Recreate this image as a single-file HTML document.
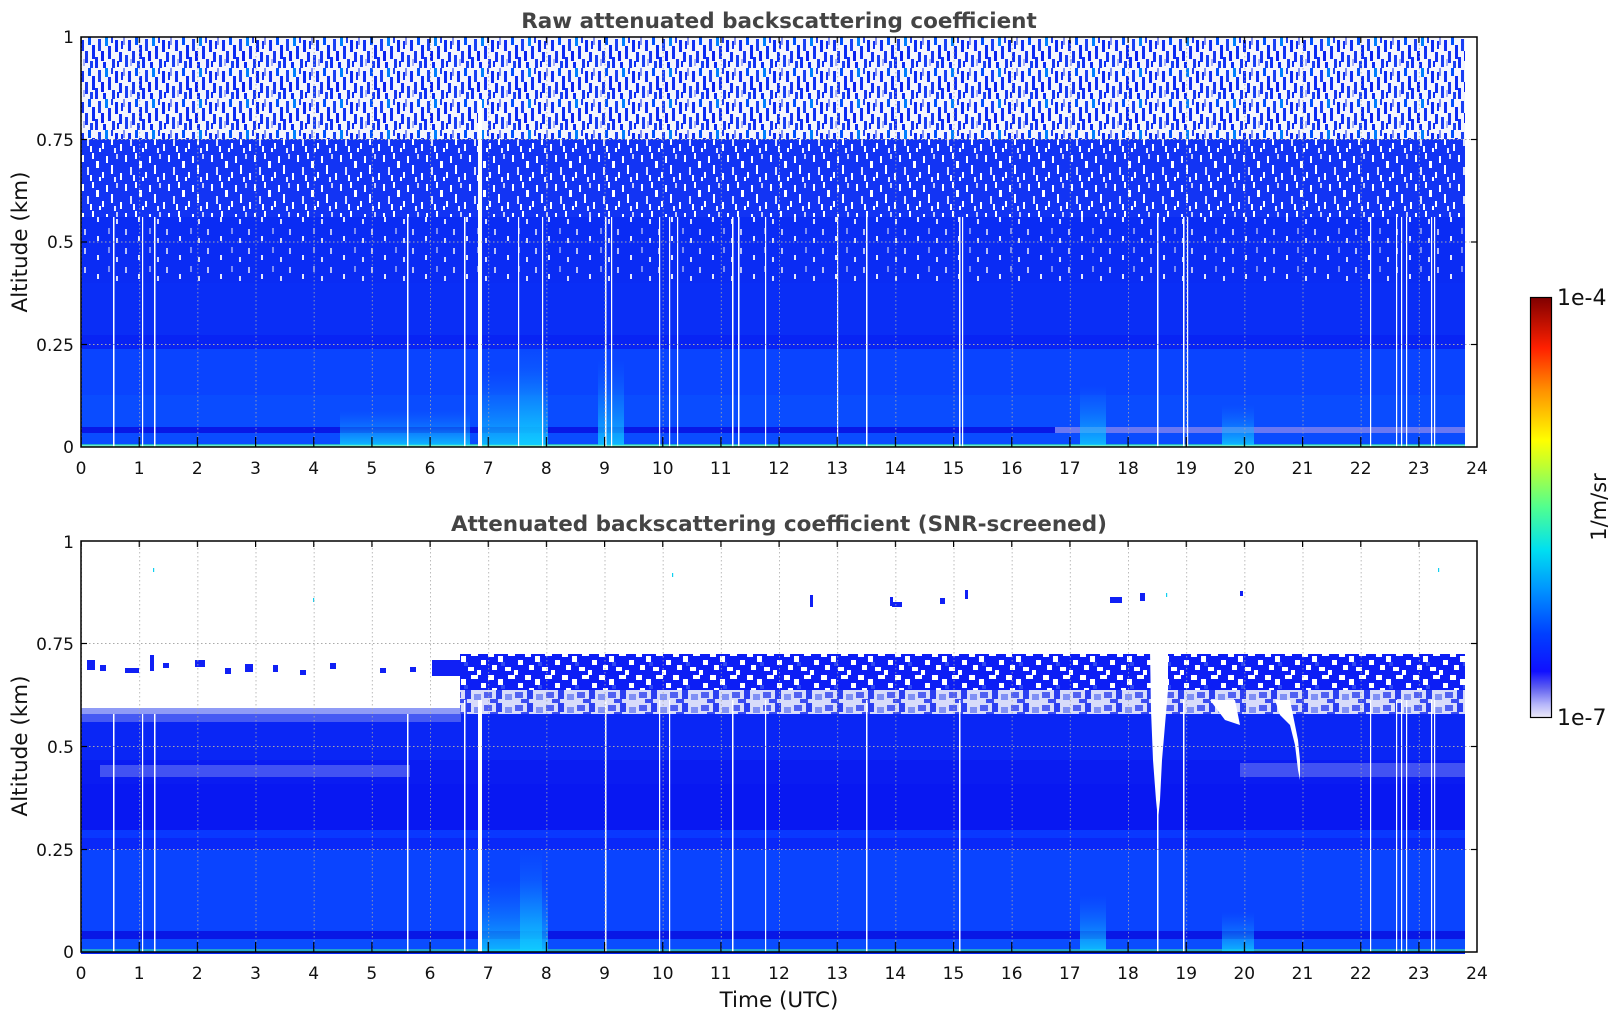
<!DOCTYPE html>
<html><head><meta charset="utf-8"><style>
html,body{margin:0;padding:0;background:#fff}
svg{display:block;font-family:"DejaVu Sans","Liberation Sans",sans-serif}
</style></head><body>
<svg width="1621" height="1020" viewBox="0 0 1621 1020" xmlns="http://www.w3.org/2000/svg">
<defs>
<pattern id="spkA" x="81" y="37" width="47" height="31" patternUnits="userSpaceOnUse">
<rect width="47" height="31" fill="#f4f5fd"/>
<rect x="0" y="3" width="3" height="11" fill="#1030f5"/><rect x="4" y="14" width="3" height="12" fill="#1838f2"/>
<rect x="7" y="0" width="3" height="8" fill="#0050ff"/><rect x="11" y="8" width="3" height="14" fill="#0a2af5"/>
<rect x="14" y="20" width="3" height="11" fill="#1030f5"/><rect x="17" y="2" width="3" height="12" fill="#1a40f5"/>
<rect x="20" y="14" width="3" height="10" fill="#0a20f0"/><rect x="24" y="0" width="3" height="9" fill="#0080ff"/>
<rect x="27" y="9" width="3" height="13" fill="#1030f5"/><rect x="31" y="22" width="3" height="9" fill="#1838f2"/>
<rect x="34" y="3" width="3" height="12" fill="#0a2af5"/><rect x="38" y="15" width="3" height="10" fill="#1030f5"/>
<rect x="42" y="0" width="2" height="8" fill="#8090f3"/><rect x="44" y="18" width="3" height="12" fill="#1a40f5"/>
<rect x="2" y="22" width="2" height="7" fill="#a8b2f6"/><rect x="22" y="25" width="3" height="6" fill="#0a2af5"/>
<rect x="30" y="0" width="2" height="6" fill="#2040f0"/><rect x="9" y="24" width="3" height="7" fill="#1a40f5"/>
<rect x="40" y="4" width="2" height="8" fill="#1030f5"/><rect x="36" y="24" width="2" height="6" fill="#0a2af5"/>
</pattern>
<pattern id="spkB" x="81" y="37" width="43" height="29" patternUnits="userSpaceOnUse">
<rect width="43" height="29" fill="#1234f4"/>
<rect x="1" y="2" width="2" height="7" fill="#fff"/><rect x="6" y="14" width="2" height="8" fill="#dfe3fb"/>
<rect x="11" y="0" width="2" height="6" fill="#fff"/><rect x="15" y="8" width="3" height="7" fill="#fff"/>
<rect x="21" y="19" width="2" height="6" fill="#fff"/><rect x="25" y="3" width="2" height="7" fill="#fff"/>
<rect x="30" y="12" width="2" height="9" fill="#fff"/><rect x="35" y="1" width="2" height="5" fill="#c8cef8"/>
<rect x="39" y="20" width="2" height="7" fill="#fff"/><rect x="9" y="22" width="2" height="6" fill="#fff"/>
<rect x="18" y="24" width="2" height="4" fill="#fff"/><rect x="33" y="24" width="2" height="5" fill="#eef"/>
</pattern>
<pattern id="spkC" x="81" y="37" width="41" height="19" patternUnits="userSpaceOnUse">
<rect width="41" height="19" fill="#0a2cf4"/>
<rect x="3" y="2" width="2" height="6" fill="#b8c0f8"/><rect x="16" y="9" width="2" height="5" fill="#e8eafb"/>
<rect x="27" y="1" width="2" height="6" fill="#8090f3"/><rect x="35" y="11" width="2" height="5" fill="#d8dcfa"/>
</pattern>
<pattern id="holes" x="81" y="652" width="37" height="23" patternUnits="userSpaceOnUse">
<rect width="37" height="23" fill="#0c1ef5"/>
<rect x="0" y="0" width="6" height="5" fill="#fff"/><rect x="10" y="4" width="5" height="6" fill="#fff"/>
<rect x="20" y="0" width="7" height="4" fill="#fff"/><rect x="30" y="8" width="5" height="5" fill="#fff"/>
<rect x="4" y="13" width="5" height="5" fill="#fff"/><rect x="17" y="15" width="6" height="4" fill="#fff"/>
<rect x="26" y="18" width="4" height="5" fill="#fff"/><rect x="13" y="10" width="4" height="4" fill="#3048f5"/>
</pattern>
<pattern id="holesL" x="81" y="690" width="31" height="13" patternUnits="userSpaceOnUse">
<rect width="31" height="13" fill="#d8dcfa"/>
<rect x="0" y="2" width="8" height="6" fill="#5060f2"/><rect x="12" y="0" width="6" height="9" fill="#2a3ef2"/>
<rect x="21" y="4" width="7" height="6" fill="#8090f4"/><rect x="6" y="9" width="8" height="4" fill="#3a4cf2"/>
</pattern>
<pattern id="vgrid" x="81" y="0" width="58.1667" height="4" patternUnits="userSpaceOnUse">
<rect x="0" y="0" width="1" height="1.5" fill="#aaa"/>
</pattern>
<pattern id="xtick" x="80.5" y="0" width="58.1667" height="10" patternUnits="userSpaceOnUse">
<rect x="0" y="0" width="1.2" height="10" fill="#000"/>
</pattern>
<linearGradient id="jet" x1="0" y1="1" x2="0" y2="0">
<stop offset="0" stop-color="#eceaf8"/><stop offset="0.03" stop-color="#b8b8fa"/>
<stop offset="0.07" stop-color="#6060f0"/><stop offset="0.11" stop-color="#1010ff"/>
<stop offset="0.2" stop-color="#0040ff"/><stop offset="0.3" stop-color="#0090ff"/>
<stop offset="0.4" stop-color="#00e0f0"/><stop offset="0.5" stop-color="#50ff90"/>
<stop offset="0.6" stop-color="#c0ff30"/><stop offset="0.66" stop-color="#ffff00"/>
<stop offset="0.78" stop-color="#ff9000"/><stop offset="0.88" stop-color="#ff2000"/>
<stop offset="1" stop-color="#800000"/>
</linearGradient>
<linearGradient id="plume" x1="0" y1="1" x2="0" y2="0">
<stop offset="0" stop-color="#10d0ff" stop-opacity="0.8"/><stop offset="1" stop-color="#1080ff" stop-opacity="0"/>
</linearGradient>
</defs>

<!-- TOP PLOT -->
<text x="779" y="28" text-anchor="middle" font-size="21.5" font-weight="bold" fill="#444">Raw attenuated backscattering coefficient</text>
<g>
<rect x="81" y="37" width="1384" height="102" fill="url(#spkA)"/>
<rect x="81" y="139" width="1384" height="78" fill="url(#spkB)"/>
<rect x="81" y="217" width="1384" height="66" fill="url(#spkC)"/>
<rect x="81" y="283" width="1384" height="62" fill="#0a2ef6"/>
<rect x="81" y="335" width="1384" height="14" fill="#0824f4"/>
<rect x="81" y="349" width="1384" height="78" fill="#0a44ff"/>
<rect x="81" y="395" width="1384" height="32" fill="#0a4cff"/>
<rect x="81" y="427" width="1384" height="6" fill="#0818e6"/>
<rect x="1055" y="427" width="410" height="6" fill="#6a78f2"/>
<rect x="81" y="433" width="1384" height="12" fill="#0a4cff"/>
<rect x="81" y="444" width="1384" height="3" fill="#30e0b0" opacity="0.7"/>
<rect x="478" y="370" width="70" height="75" fill="url(#plume)"/>
<rect x="520" y="340" width="22" height="105" fill="url(#plume)"/>
<rect x="598" y="360" width="26" height="85" fill="url(#plume)"/>
<rect x="1080" y="385" width="26" height="60" fill="url(#plume)"/>
<rect x="1222" y="405" width="32" height="40" fill="url(#plume)"/>
<rect x="340" y="410" width="130" height="35" fill="url(#plume)"/>
</g>
<g fill="#fff">
<rect x="113" y="217" width="1.5" height="230"/><rect x="142" y="217" width="1.2" height="230"/><rect x="154" y="217" width="1.5" height="230"/>
<rect x="407" y="217" width="1.5" height="230"/><rect x="464" y="217" width="1.5" height="230"/><rect x="478" y="100" width="4" height="347"/>
<rect x="518" y="217" width="1.2" height="230"/><rect x="542" y="217" width="1.2" height="230"/><rect x="605" y="217" width="1.5" height="230"/>
<rect x="611" y="217" width="1.2" height="230"/><rect x="659" y="217" width="1.2" height="230"/><rect x="669" y="217" width="1.2" height="230"/>
<rect x="677" y="217" width="1.2" height="230"/><rect x="732" y="217" width="1.5" height="230"/><rect x="738" y="217" width="1.5" height="230"/>
<rect x="765" y="217" width="1.2" height="230"/><rect x="837" y="217" width="1.2" height="230"/><rect x="866" y="217" width="1.5" height="230"/>
<rect x="959" y="217" width="1.5" height="230"/><rect x="962" y="217" width="1.2" height="230"/><rect x="1157" y="217" width="1.5" height="230"/>
<rect x="1183" y="217" width="1.5" height="230"/><rect x="1187" y="217" width="1.2" height="230"/><rect x="1370" y="217" width="1.2" height="230"/>
<rect x="1396" y="217" width="1.2" height="230"/><rect x="1401" y="217" width="1.2" height="230"/><rect x="1406" y="217" width="1.2" height="230"/>
<rect x="1431" y="217" width="1.2" height="230"/><rect x="1434" y="217" width="1.2" height="230"/>
</g>
<rect x="81" y="37" width="1396" height="410" fill="url(#vgrid)" opacity="0.8"/>
<g stroke="#aaa" stroke-dasharray="1.5 2.5" stroke-width="1">
<line x1="81" y1="344.5" x2="1477" y2="344.5"/><line x1="81" y1="242" x2="1477" y2="242"/><line x1="81" y1="139.5" x2="1477" y2="139.5"/>
</g>
<rect x="81" y="37" width="1396" height="410" fill="none" stroke="#000" stroke-width="1.5"/>
<rect x="81" y="437" width="1396" height="10" fill="url(#xtick)"/>
<rect x="81" y="37" width="1396" height="6" fill="url(#xtick)"/>
<g stroke="#000" stroke-width="1.2">
<line x1="81" y1="344.5" x2="87" y2="344.5"/><line x1="81" y1="242" x2="87" y2="242"/><line x1="81" y1="139.5" x2="87" y2="139.5"/>
<line x1="1471" y1="344.5" x2="1477" y2="344.5"/><line x1="1471" y1="242" x2="1477" y2="242"/><line x1="1471" y1="139.5" x2="1477" y2="139.5"/>
</g>
<g font-size="17" text-anchor="end" fill="#111">
<text x="74" y="43">1</text><text x="74" y="146">0.75</text><text x="74" y="248">0.5</text><text x="74" y="351">0.25</text><text x="74" y="453">0</text>
</g>
<text transform="translate(27 242) rotate(-90)" text-anchor="middle" font-size="21.5" fill="#111">Altitude (km)</text>
<g font-size="17" text-anchor="middle" fill="#111">
<text x="81" y="474">0</text><text x="139.2" y="474">1</text><text x="197.3" y="474">2</text><text x="255.5" y="474">3</text><text x="313.7" y="474">4</text><text x="371.8" y="474">5</text><text x="430" y="474">6</text><text x="488.2" y="474">7</text><text x="546.3" y="474">8</text><text x="604.5" y="474">9</text><text x="662.7" y="474">10</text><text x="720.8" y="474">11</text><text x="779" y="474">12</text><text x="837.2" y="474">13</text><text x="895.3" y="474">14</text><text x="953.5" y="474">15</text><text x="1011.7" y="474">16</text><text x="1069.8" y="474">17</text><text x="1128" y="474">18</text><text x="1186.2" y="474">19</text><text x="1244.3" y="474">20</text><text x="1302.5" y="474">21</text><text x="1360.7" y="474">22</text><text x="1418.8" y="474">23</text><text x="1477" y="474">24</text>
</g>

<!-- BOTTOM PLOT -->
<text x="779" y="531" text-anchor="middle" font-size="21.5" font-weight="bold" fill="#444">Attenuated backscattering coefficient (SNR-screened)</text>
<g>
<rect x="460" y="654" width="1005" height="40" fill="url(#holes)"/>
<rect x="460" y="690" width="1005" height="24" fill="url(#holesL)"/>
<g fill="#1020f5">
<rect x="87" y="660" width="8" height="10"/><rect x="100" y="665" width="6" height="6"/><rect x="125" y="668" width="14" height="5"/>
<rect x="150" y="655" width="4" height="16"/><rect x="163" y="663" width="6" height="5"/><rect x="195" y="660" width="10" height="7"/>
<rect x="225" y="668" width="6" height="6"/><rect x="245" y="664" width="8" height="8"/><rect x="273" y="665" width="5" height="7"/>
<rect x="300" y="670" width="6" height="5"/><rect x="330" y="663" width="6" height="6"/><rect x="380" y="668" width="6" height="5"/>
<rect x="410" y="667" width="6" height="5"/><rect x="432" y="660" width="28" height="16"/>
</g>
<rect x="81" y="714" width="1384" height="240" fill="#0a26f5"/>
<rect x="81" y="708" width="380" height="14" fill="#6070f2" opacity="0.7"/>
<rect x="81" y="760" width="1384" height="24" fill="#0a1cf2"/>
<rect x="100" y="765" width="310" height="12" fill="#5060f2" opacity="0.8"/>
<rect x="1240" y="763" width="225" height="14" fill="#5060f2" opacity="0.8"/>
<rect x="81" y="784" width="1384" height="46" fill="#0818f2"/>
<rect x="81" y="830" width="1384" height="20" fill="#0a38ff"/>
<rect x="81" y="838" width="1384" height="12" fill="#0a28f8"/>
<rect x="81" y="850" width="1384" height="82" fill="#0a44ff"/>
<rect x="81" y="931" width="1384" height="8" fill="#0818e6"/>
<rect x="81" y="939" width="1384" height="13" fill="#0a4cff"/>
<rect x="81" y="949" width="1384" height="3" fill="#30e0b0" opacity="0.6"/>
<rect x="478" y="880" width="70" height="72" fill="url(#plume)"/>
<rect x="520" y="850" width="22" height="102" fill="url(#plume)"/>
<rect x="1080" y="895" width="26" height="55" fill="url(#plume)"/>
<rect x="1222" y="912" width="32" height="40" fill="url(#plume)"/>
<polygon points="1150,650 1168,650 1168,690 1162,760 1160,800 1158,820 1156,800 1153,760 1151,710" fill="#fff"/>
<polygon points="1275,700 1290,700 1298,740 1300,760 1300,780 1298,770 1295,745 1290,725 1280,715" fill="#fff"/>
<polygon points="1210,700 1235,700 1240,725 1225,720" fill="#fff"/>
</g>
<g fill="#fff">
<rect x="113" y="714" width="1.5" height="238"/><rect x="142" y="714" width="1.2" height="238"/><rect x="154" y="714" width="1.5" height="238"/>
<rect x="407" y="714" width="1.5" height="238"/><rect x="464" y="700" width="1.5" height="252"/><rect x="478" y="700" width="4" height="252"/>
<rect x="605" y="700" width="1.5" height="252"/><rect x="659" y="700" width="1.2" height="252"/><rect x="669" y="700" width="1.2" height="252"/>
<rect x="732" y="700" width="1.5" height="252"/><rect x="765" y="700" width="1.2" height="252"/><rect x="866" y="700" width="1.5" height="252"/>
<rect x="959" y="700" width="1.5" height="252"/><rect x="1157" y="700" width="1.5" height="252"/><rect x="1183" y="700" width="1.5" height="252"/>
<rect x="1370" y="700" width="1.2" height="252"/><rect x="1396" y="700" width="1.2" height="252"/><rect x="1401" y="700" width="1.2" height="252"/>
<rect x="1406" y="700" width="1.2" height="252"/><rect x="1431" y="700" width="1.2" height="252"/><rect x="1434" y="700" width="1.2" height="252"/>
</g>
<g fill="#1020f5">
<rect x="890" y="597" width="3" height="9"/><rect x="892" y="602" width="10" height="5"/><rect x="1110" y="597" width="12" height="6"/>
<rect x="1140" y="593" width="5" height="8"/><rect x="940" y="598" width="5" height="6"/><rect x="965" y="590" width="3" height="9"/>
<rect x="1240" y="591" width="3" height="5"/><rect x="810" y="595" width="3" height="12"/>
</g>
<g fill="#10d0f0">
<rect x="153" y="568" width="1.2" height="4"/><rect x="313" y="598" width="1.2" height="4"/><rect x="1438" y="568" width="1.2" height="4"/><rect x="1166" y="593" width="1.2" height="4"/><rect x="672" y="573" width="1.2" height="4"/>
</g>
<rect x="81" y="541" width="1396" height="411" fill="url(#vgrid)" opacity="0.8"/>
<g stroke="#aaa" stroke-dasharray="1.5 2.5" stroke-width="1">
<line x1="81" y1="849.5" x2="1477" y2="849.5"/><line x1="81" y1="746.5" x2="1477" y2="746.5"/><line x1="81" y1="643.5" x2="1477" y2="643.5"/>
</g>
<rect x="81" y="541" width="1396" height="411" fill="none" stroke="#000" stroke-width="1.5"/>
<rect x="81" y="942" width="1396" height="10" fill="url(#xtick)"/>
<rect x="81" y="541" width="1396" height="6" fill="url(#xtick)"/>
<g stroke="#000" stroke-width="1.2">
<line x1="81" y1="849.5" x2="87" y2="849.5"/><line x1="81" y1="746.5" x2="87" y2="746.5"/><line x1="81" y1="643.5" x2="87" y2="643.5"/>
<line x1="1471" y1="849.5" x2="1477" y2="849.5"/><line x1="1471" y1="746.5" x2="1477" y2="746.5"/><line x1="1471" y1="643.5" x2="1477" y2="643.5"/>
</g>
<g font-size="17" text-anchor="end" fill="#111">
<text x="74" y="548">1</text><text x="74" y="650">0.75</text><text x="74" y="753">0.5</text><text x="74" y="856">0.25</text><text x="74" y="958">0</text>
</g>
<text transform="translate(27 746) rotate(-90)" text-anchor="middle" font-size="21.5" fill="#111">Altitude (km)</text>
<g font-size="17" text-anchor="middle" fill="#111">
<text x="81" y="979">0</text><text x="139.2" y="979">1</text><text x="197.3" y="979">2</text><text x="255.5" y="979">3</text><text x="313.7" y="979">4</text><text x="371.8" y="979">5</text><text x="430" y="979">6</text><text x="488.2" y="979">7</text><text x="546.3" y="979">8</text><text x="604.5" y="979">9</text><text x="662.7" y="979">10</text><text x="720.8" y="979">11</text><text x="779" y="979">12</text><text x="837.2" y="979">13</text><text x="895.3" y="979">14</text><text x="953.5" y="979">15</text><text x="1011.7" y="979">16</text><text x="1069.8" y="979">17</text><text x="1128" y="979">18</text><text x="1186.2" y="979">19</text><text x="1244.3" y="979">20</text><text x="1302.5" y="979">21</text><text x="1360.7" y="979">22</text><text x="1418.8" y="979">23</text><text x="1477" y="979">24</text>
</g>
<text x="779" y="1007" text-anchor="middle" font-size="21.5" fill="#111">Time (UTC)</text>

<!-- COLORBAR -->
<rect x="1530.5" y="297.5" width="21" height="420" fill="url(#jet)" stroke="#000" stroke-width="1.2"/>
<text x="1557" y="305" font-size="22" fill="#111">1e-4</text>
<text x="1557" y="725" font-size="22" fill="#111">1e-7</text>
<text transform="translate(1606 507) rotate(-90)" text-anchor="middle" font-size="21" fill="#111">1/m/sr</text>
</svg>
</body></html>
